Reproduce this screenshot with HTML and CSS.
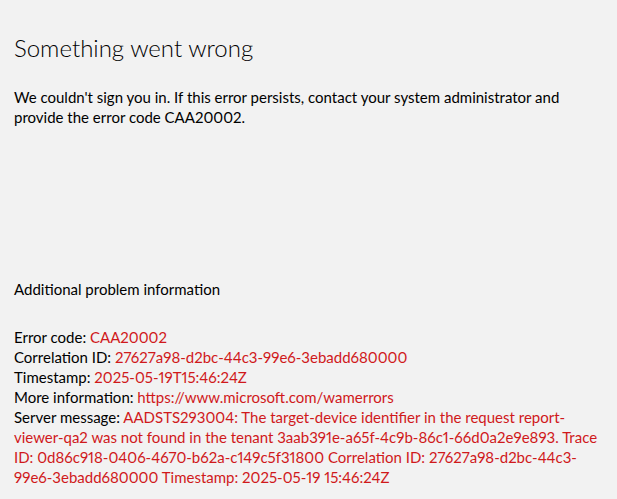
FILE: index.html
```html
<!DOCTYPE html>
<html lang="en">
<head>
<meta charset="utf-8">
<title>Something went wrong</title>
<link rel="stylesheet" href="styles.css">
</head>
<body>
<main class="page">
  <h1 class="title">Something went wrong</h1>
  <p class="message">We couldn't sign you in. If this error persists, contact your system administrator and provide the error code CAA20002.</p>
  <section class="details">
    <h2 class="details-title">Additional problem information</h2>
    <div class="details-list">
      <div>Error code: <span class="value">CAA20002</span></div>
      <div>Correlation ID: <span class="value">27627a98-d2bc-44c3-99e6-3ebadd680000</span></div>
      <div>Timestamp: <span class="value">2025-05-19T15:46:24Z</span></div>
      <div>More information: <span class="value">https://www.microsoft.com/wamerrors</span></div>
      <div>Server message: <span class="value">AADSTS293004: The target-device identifier in the request report-viewer-qa2 was not found in the tenant 3aab391e-a65f-4c9b-86c1-66d0a2e9e893. Trace ID: 0d86c918-0406-4670-b62a-c149c5f31800 Correlation ID: 27627a98-d2bc-44c3-99e6-3ebadd680000 Timestamp: 2025-05-19 15:46:24Z</span></div>
    </div>
  </section>
</main>
</body>
</html>
```

FILE: styles.css
```css
html, body {
  margin: 0;
  padding: 0;
  background: #f2f2f2;
}
body {
  font-family: "Lato", "Noto Sans", sans-serif;
  font-size: 15px;
  line-height: 20px;
  color: #000;
  font-variant-numeric: proportional-nums;
}
.page {
  padding: 33px 12px 0 14px;
}
.title {
  margin: 0;
  font-size: 24px;
  line-height: 30px;
  font-weight: 300;
}
.message {
  margin: 24px 0 0 0;
}
.details {
  margin-top: 152px;
}
.details-title {
  margin: 0;
  font-size: 15px;
  line-height: 20px;
  font-weight: 400;
}
.details-list {
  margin-top: 28px;
}
.value {
  color: #d0191b;
}
```
